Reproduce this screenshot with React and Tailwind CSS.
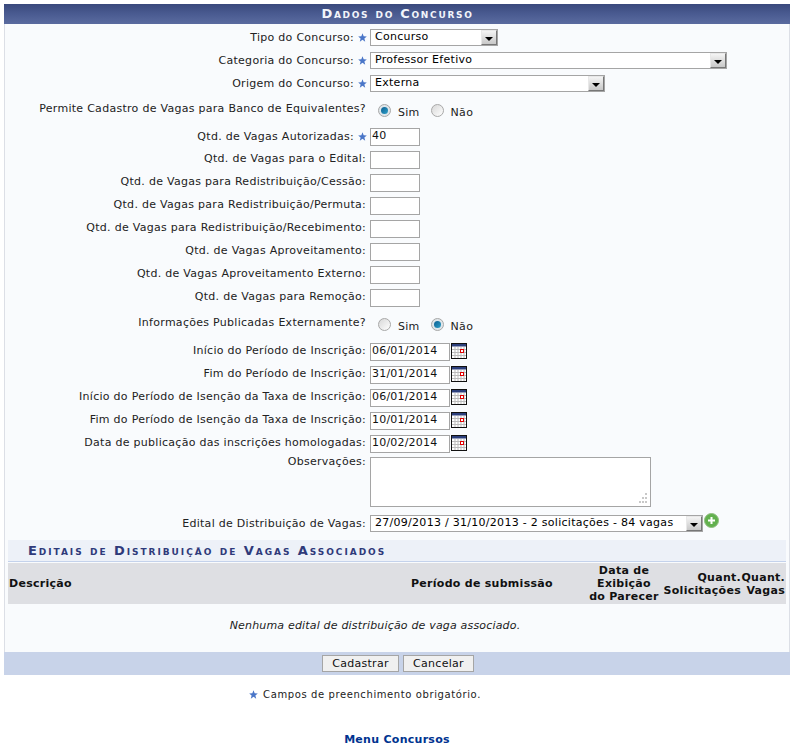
import React from 'react';

const Star = () => (
    <svg width="9" height="9" viewBox="0 0 10 10" className="shrink-0">
        <path d="M5 0.3 L6.3 3.6 L9.8 3.8 L7.1 6 L8 9.6 L5 7.6 L2 9.6 L2.9 6 L0.2 3.8 L3.7 3.6 Z" fill="#4a76c8" />
    </svg>
);

const Arrow = () => (
    <div className="ml-auto w-[16px] h-[15px] bg-gradient-to-b from-[#f4f4f4] to-[#c8c8c8] border border-t-[#e8e8e8] border-l-[#e8e8e8] border-r-[#777] border-b-[#777] flex items-center justify-center">
        <div className="w-0 h-0 mt-[2px] border-x-[4px] border-x-transparent border-t-[4px] border-t-black" />
    </div>
);

const Select = ({ value, width }) => (
    <div style={{ width }} className="h-[17px] bg-white border border-[#a5a5a5] flex items-center pl-[4px] text-[11px] text-black">
        <span className="whitespace-nowrap">{value}</span>
        <Arrow />
    </div>
);

const Input = ({ value, w = 'w-[50px]' }) => (
    <div className={`${w} h-[18px] bg-white border border-[#a5a5a5] flex items-center pl-[1px] text-[11px] text-[#111] tracking-[0.2px]`}>
        {value}
    </div>
);

const Radio = ({ on }) => (
    <div className={`w-[13px] h-[13px] rounded-full border border-[#a8a8a8] flex items-center justify-center ${on ? 'bg-[#dfe6ea]' : 'bg-gradient-to-br from-[#d8d8d8] to-[#ffffff]'}`}>
        {on && <div className="w-[7px] h-[7px] rounded-full bg-gradient-to-br from-[#0c5f92] to-[#2ea0c8]" />}
    </div>
);

const Calendar = () => (
    <svg width="16" height="16" viewBox="0 0 16 16" className="ml-[1px] -mt-[2px] shrink-0">
        <rect x="0.5" y="0.5" width="15" height="15" fill="#fff" stroke="#111" />
        <rect x="1" y="1" width="14" height="2.5" fill="#2c3f7c" />
        <path d="M1 6.5H15M1 9.5H15M1 12.5H15M4 4V15M7 4V15M10 4V15M13 4V15" stroke="#bbb" strokeWidth="1" />
        <rect x="9.5" y="6.5" width="3" height="3" fill="#fff" stroke="#e00000" />
    </svg>
);

const Row = ({ label, star, children }) => (
    <div className="flex h-[23px] items-center">
        <div className="w-[361px] shrink-0 flex items-center justify-end whitespace-nowrap">
            <span className={star ? 'mt-[2px]' : ''}>{label}</span>
            {star && <span className="ml-[4px] mr-[-1px]"><Star /></span>}
        </div>
        <div className="flex items-center ml-[4px]">{children}</div>
    </div>
);

const vagas = [
    ['Qtd. de Vagas Autorizadas:', '40', true],
    ['Qtd. de Vagas para o Edital:', ''],
    ['Qtd. de Vagas para Redistribuição/Cessão:', ''],
    ['Qtd. de Vagas para Redistribuição/Permuta:', ''],
    ['Qtd. de Vagas para Redistribuição/Recebimento:', ''],
    ['Qtd. de Vagas Aproveitamento:', ''],
    ['Qtd. de Vagas Aproveitamento Externo:', ''],
    ['Qtd. de Vagas para Remoção:', ''],
];

const datas = [
    ['Início do Período de Inscrição:', '06/01/2014'],
    ['Fim do Período de Inscrição:', '31/01/2014'],
    ['Início do Período de Isenção da Taxa de Inscrição:', '06/01/2014'],
    ['Fim do Período de Isenção da Taxa de Inscrição:', '10/01/2014'],
    ['Data de publicação das inscrições homologadas:', '10/02/2014'],
];

const RadioRow = ({ label, sim }) => (
    <div className="flex items-center h-[23px]">
        <div className="w-[361px] shrink-0 text-right whitespace-nowrap -mt-[8px]">{label}</div>
        <div className="ml-[12px] -mt-[6px]"><Radio on={sim} /></div>
        <span className="ml-[7px]">Sim</span>
        <div className="ml-[11px] -mt-[6px]"><Radio on={!sim} /></div>
        <span className="ml-[7px]">Não</span>
    </div>
);

export default function App() {
    return (
        <div className="min-h-[747px] bg-white text-[11px] text-[#222] tracking-[0.28px] font-['DejaVu_Sans','Liberation_Sans',sans-serif] pt-[4px]">
            <div className="mx-[4px] w-[786px]">
                <div className="h-[20px] bg-gradient-to-b from-[#39497c] via-[#4a5b91] to-[#5a6b9f] flex items-center justify-center pl-[1px]">
                    <h3 className="text-[#f2f4fa] font-bold text-[13px] [font-variant:small-caps] tracking-[1.7px]">Dados do Concurso</h3>
                </div>
                <div className="bg-[#f9fbfd] border-x border-[#dcdfe6]">
                    <div className="pt-[2px]">
                        <Row label="Tipo do Concurso:" star><Select value="Concurso" width="128px" /></Row>
                        <Row label="Categoria do Concurso:" star><Select value="Professor Efetivo" width="357px" /></Row>
                        <Row label="Origem do Concurso:" star><Select value="Externa" width="235px" /></Row>
                        <div className="pt-[7px]">
                            <RadioRow label="Permite Cadastro de Vagas para Banco de Equivalentes?" sim />
                        </div>
                        {vagas.map(([label, value, star]) => (
                            <Row key={label} label={label} star={star}><Input value={value} /></Row>
                        ))}
                        <div className="pt-[7px] pb-[1px]">
                            <RadioRow label="Informações Publicadas Externamente?" sim={false} />
                        </div>
                        {datas.map(([label, value]) => (
                            <Row key={label} label={label}>
                                <Input value={value} w="w-[80px]" />
                                <Calendar />
                            </Row>
                        ))}
                        <div className="flex h-[60px] pt-[2px]">
                            <div className="w-[361px] shrink-0 text-right -mt-[3px]">Observações:</div>
                            <div className="ml-[4px] relative w-[281px] h-[50px] bg-white border border-[#a5a5a5]">
                                <svg width="12" height="12" viewBox="0 0 12 12" className="absolute right-[2px] bottom-[2px]">
                                    <path d="M9 1h2v2H9zM6 5h2v2H6zM9 5h2v2H9zM3 9h2v2H3zM6 9h2v2H6zM9 9h2v2H9z" fill="#c8c8c8" />
                                </svg>
                            </div>
                        </div>
                        <div className="flex items-start h-[25px]">
                            <div className="w-[361px] shrink-0 text-right pt-[1px]">Edital de Distribuição de Vagas:</div>
                            <div className="ml-[4px]"><Select value="27/09/2013 / 31/10/2013 - 2 solicitações - 84 vagas" width="333px" /></div>
                            <svg width="15" height="15" viewBox="0 0 15 15" className="ml-[1px] -mt-[2px]">
                                <circle cx="7.5" cy="7.5" r="7" fill="#62b04e" stroke="#8fbd7e" />
                                <path d="M6.5 4h2v2.5H11v2H8.5V11h-2V8.5H4v-2h2.5z" fill="#fff" />
                            </svg>
                        </div>
                    </div>

                    <div className="mx-[3px]">
                        <div className="h-[22px] bg-[#edf1f8] border-b border-[#c4d2eb] flex items-center pl-[20px]">
                            <h4 className="text-[#2f3a7a] font-bold text-[13px] [font-variant:small-caps] tracking-[1.95px]">Editais de Distribuição de Vagas Associados</h4>
                        </div>
                        <div className="flex items-center h-[41px] mt-[1px] bg-[#dedfe3] font-bold text-[11px] text-[#111] leading-[13px] whitespace-nowrap">
                            <div className="pl-[1px] w-[403px]">Descrição</div>
                            <div className="w-[177px]">Período de submissão</div>
                            <div className="w-[72px] text-center">Data de<br />Exibição<br />do Parecer</div>
                            <div className="w-[81px] text-right">Quant.<br />Solicitações</div>
                            <div className="w-[44px] text-right">Quant.<br />Vagas</div>
                        </div>
                    </div>
                    <div className="h-[48px] flex items-center justify-center italic text-[#222] tracking-[0.18px] pr-[44px] pb-[4px]">
                        Nenhuma edital de distribuição de vaga associado.
                    </div>
                </div>
                <div className="h-[23px] bg-[#c8d3e9] flex items-center justify-center gap-[4px] pl-[2px]">
                    <button className="h-[17px] w-[77px] bg-[#f0f0f0] border border-[#a5a5a5] text-[11px] text-[#111] font-['DejaVu_Sans',sans-serif]">Cadastrar</button>
                    <button className="h-[17px] w-[71px] bg-[#f0f0f0] border border-[#a5a5a5] text-[11px] text-[#111] font-['DejaVu_Sans',sans-serif]">Cancelar</button>
                </div>
                <div className="flex items-center justify-center gap-[5px] mt-[12px] h-[14px] pr-[64px] text-[10px] text-[#222] tracking-[0.6px]">
                    <Star />
                    <span>Campos de preenchimento obrigatório.</span>
                </div>
                <div className="mt-[31px] text-center leading-[16px]">
                    <a className="font-bold text-[11px] text-[#003390]">Menu Concursos</a>
                </div>
            </div>
        </div>
    );
}
